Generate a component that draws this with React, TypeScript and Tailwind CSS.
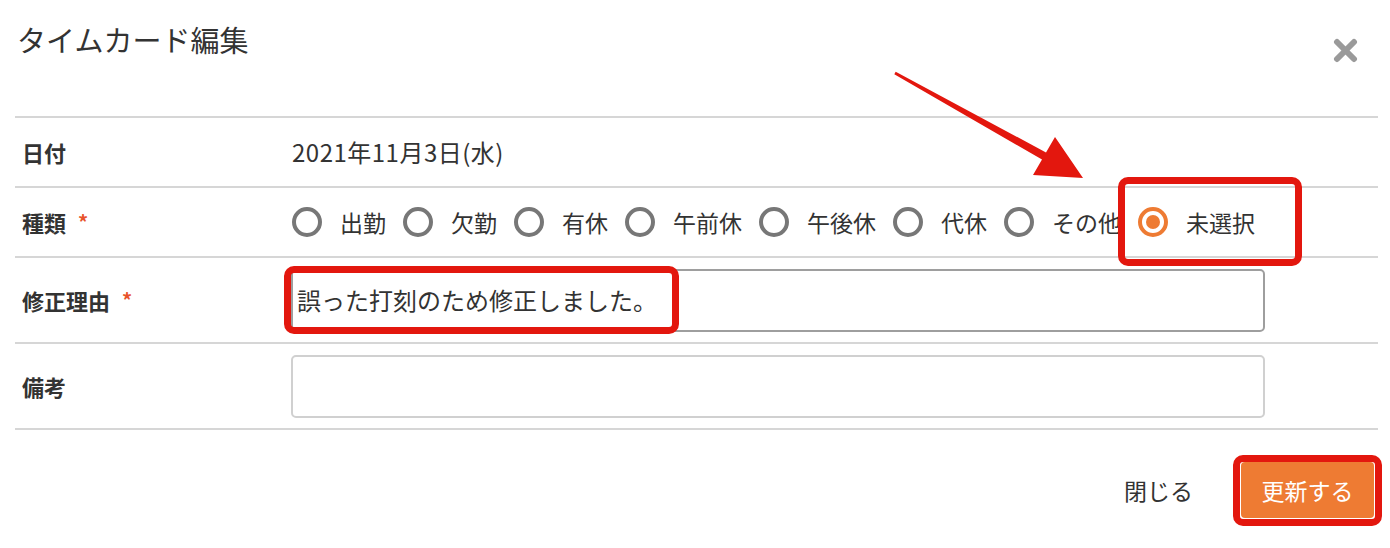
import React from "react";

const options = ["出勤", "欠勤", "有休", "午前休", "午後休", "代休", "その他", "未選択"];

function Radio({ label, checked }: { label: string; checked?: boolean }) {
  return (
    <div className="flex items-center shrink-0 mr-[17px]">
      {checked ? (
        <span className="shrink-0 box-border w-[30px] h-[30px] rounded-full border-[4px] border-[#ee7b33] flex items-center justify-center">
          <span className="w-[14px] h-[14px] rounded-full bg-[#ee7b33]" />
        </span>
      ) : (
        <span className="shrink-0 box-border w-[30px] h-[30px] rounded-full border-[4px] border-[#777777]" />
      )}
      <span className="ml-[18px] text-[23px] leading-[30px] text-[#333333] whitespace-nowrap">{label}</span>
    </div>
  );
}

function Label({ text, required }: { text: string; required?: boolean }) {
  return (
    <div className="w-[276px] shrink-0 pl-[7px] flex items-center">
      <span className="text-[22px] font-bold text-[#333333]">{text}</span>
      {required && <span className="ml-[12px] text-[20px] font-bold text-[#e8532b]">*</span>}
    </div>
  );
}

export default function App() {
  return (
    <div className="relative w-[1390px] h-[548px] bg-white overflow-hidden font-['Noto_Sans_CJK_JP','Liberation_Sans',sans-serif] text-[#333333]">
      {/* Header */}
      <div className="h-[116px] flex items-start justify-between">
        <h1 className="mt-[19px] ml-[17px] text-[29px] leading-[40px] font-normal text-[#333333]">タイムカード編集</h1>
        <button className="mt-[38px] mr-[32px] w-[25px] h-[25px]">
          <svg width="25" height="25" viewBox="0 0 25 25">
            <line x1="4" y1="4" x2="21" y2="21" stroke="#9a9a9a" strokeWidth="6" strokeLinecap="round" />
            <line x1="21" y1="4" x2="4" y2="21" stroke="#9a9a9a" strokeWidth="6" strokeLinecap="round" />
          </svg>
        </button>
      </div>

      {/* Body */}
      <div className="ml-[15px] w-[1363px]">
        <div className="border-t-2 border-[#d6d6d6] h-[70px] flex items-center">
          <Label text="日付" />
          <span className="text-[24px] tracking-[0.5px] ml-[1px]">2021年11月3日(水)</span>
        </div>
        <div className="border-t-2 border-[#d6d6d6] h-[70px] flex items-center">
          <Label text="種類" required />
          <div className="flex items-center ml-[1px]">
            {options.map((o) => (
              <Radio key={o} label={o} checked={o === "未選択"} />
            ))}
          </div>
        </div>
        <div className="border-t-2 border-[#d6d6d6] h-[86px] flex items-center">
          <Label text="修正理由" required />
          <div className="w-[974px] h-[63px] border-2 border-[#9e9e9e] rounded-[5px] flex items-center px-[4px]">
            <span className="text-[24px] leading-[30px]">誤った打刻のため修正しました。</span>
          </div>
        </div>
        <div className="border-t-2 border-b-2 border-[#d6d6d6] h-[88px] flex items-center">
          <Label text="備考" />
          <div className="w-[974px] h-[63px] border-2 border-[#d0d0d0] rounded-[5px]" />
        </div>
      </div>

      {/* Footer */}
      <div className="flex items-center justify-end pr-[16px] mt-[32px]">
        <span className="text-[23px] mr-[48px]">閉じる</span>
        <button className="w-[133px] h-[56px] rounded-[4px] bg-[#ee7b33] text-white text-[23px]">更新する</button>
      </div>

      {/* Annotations */}
      <div className="absolute left-[1118px] top-[177px] w-[184px] h-[89px] border-[7px] border-[#e3170e] rounded-[10px]" />
      <div className="absolute left-[284px] top-[266px] w-[395px] h-[68px] border-[7px] border-[#e3170e] rounded-[10px]" />
      <div className="absolute left-[1233px] top-[455px] w-[149px] h-[71px] border-[7px] border-[#e3170e] rounded-[10px]" />
      <svg className="absolute left-0 top-0" width="1390" height="548" viewBox="0 0 1390 548">
        <polygon
          points="895.7,71.7 1046,152.5 1055,137 1083,178 1033,175 1042,159.5 894.3,74.3"
          fill="#e3170e"
        />
      </svg>
    </div>
  );
}
